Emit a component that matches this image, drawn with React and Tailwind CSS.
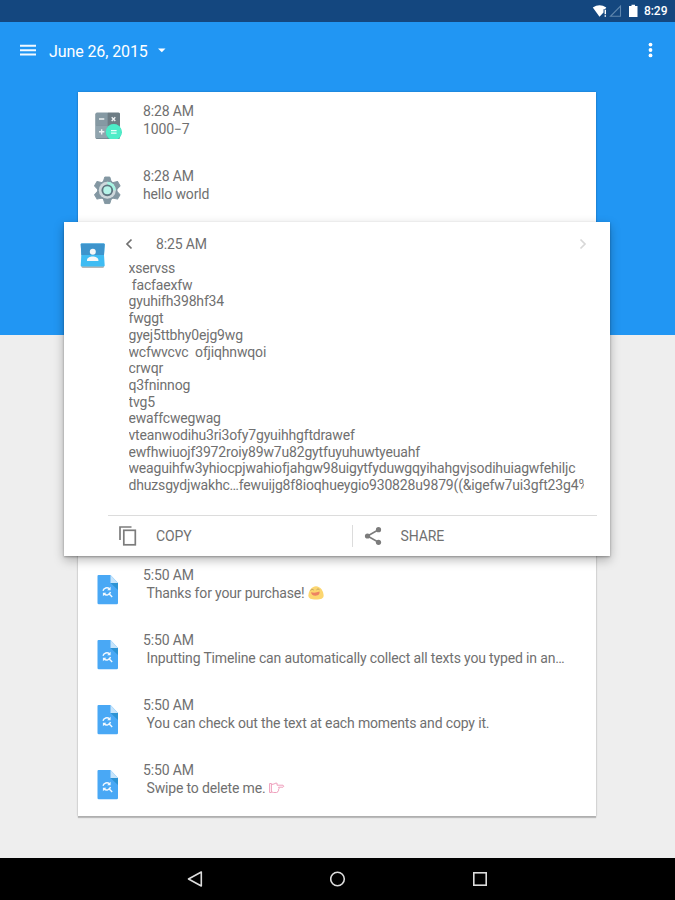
import React from 'react';

function CalculatorIcon() {
  return (
    <svg className="mb-[4px] ml-[1px] h-[30px] w-[30px] shrink-0" viewBox="0 0 30 30">
      <rect x="2.500" y="4" width="24.500" height="26" rx="1.500" fill="#71838c" />
      <path d="M2.500 16.500H14.800V29.300H4A1.500 1.500 0 0 1 2.500 27.800Z" fill="#90a4ae" />
      <path d="M2.500 5A1.500 1.500 0 0 1 4 3.500H14.800V16.500H2.500Z" fill="#8599a3" />
      <path d="M14.800 16.500H27V27.800A1.500 1.500 0 0 1 25.500 29.300H14.800Z" fill="#78878f" />
      <path d="M14.800 3.500H25.500A1.500 1.500 0 0 1 27 5V16.500H14.800Z" fill="#6d7c84" />
      <path d="M6 10H11.300M6 22.800H11.300M8.650 20.200V25.400M18.700 8.300L22.300 11.900M22.300 8.300L18.700 11.900" stroke="#eef2f4" strokeWidth="1.400" fill="none" />
      <circle cx="20.800" cy="23.300" r="8" fill="#37d9b3" />
      <circle cx="20.800" cy="22.900" r="7.900" fill="#4eecc8" />
      <path d="M18 21.700H23.600M18 24.200H23.600" stroke="#e8fffa" strokeWidth="1.200" />
    </svg>
  );
}

function GearIcon() {
  return (
    <svg className="mb-[1px] h-[30px] w-[30px] shrink-0" viewBox="-.8 -.8 31 31">
      <g fill="#8397a2" stroke="#8397a2" strokeWidth="1" strokeLinejoin="round">
        <circle cx="15" cy="15" r="10" />
        <path d="M10.800 6.500L12.400 1.300H17.600L19.200 6.500Z" />
        <path d="M10.800 6.500L12.400 1.300H17.600L19.200 6.500Z" transform="rotate(60 15 15)" />
        <path d="M10.800 6.500L12.400 1.300H17.600L19.200 6.500Z" transform="rotate(120 15 15)" />
        <path d="M10.800 6.500L12.400 1.300H17.600L19.200 6.500Z" transform="rotate(180 15 15)" />
        <path d="M10.800 6.500L12.400 1.300H17.600L19.200 6.500Z" transform="rotate(240 15 15)" />
        <path d="M10.800 6.500L12.400 1.300H17.600L19.200 6.500Z" transform="rotate(300 15 15)" />
      </g>
      <circle cx="15" cy="15" r="8.800" fill="#cfd8dc" />
      <path d="M15 6.200A8.800 8.800 0 0 1 23.800 15H15Z" fill="#a7f5e4" />
      <circle cx="15" cy="15" r="5.100" fill="#b5f3e8" stroke="#5f7681" strokeWidth="1.900" />
    </svg>
  );
}

function DocIcon() {
  return (
    <svg className="ml-[1px] h-[30px] w-[22px]" viewBox="0 0 22 30">
      <path d="M1.500 0H13.500L21 8V28A1.300 1.300 0 0 1 19.700 29.300H1.800A1.300 1.300 0 0 1 .5 28V1A1 1 0 0 1 1.500 0Z" fill="#49a8f5" />
      <path d="M13.500 8H21V15Z" fill="#2c93d4" />
      <path d="M13.500 0L21 8H13.500Z" fill="#c6e4fb" />
      <g fill="none" stroke="#f2f9ff" strokeWidth="1.400">
        <path d="M6 15.700A4 4 0 0 1 12.500 13.800" />
        <path d="M13.500 17A4 4 0 0 1 7 19" />
        <path d="M11.800 18.600L15.200 22" />
      </g>
      <path d="M13.600 11.700V15.200H10.100ZM5.900 21.200V17.700H9.400Z" fill="#f2f9ff" />
    </svg>
  );
}

function ContactIcon() {
  return (
    <svg className="h-[26px] w-[26px]" viewBox="0 0 26 26">
      <rect x="1.500" y="4" width="22.500" height="22" rx="1.500" fill="#b7b7b7" />
      <path d="M1.700 1.500H23.700A1 1 0 0 1 24.700 2.500L24 13L24.700 23.500A1 1 0 0 1 23.700 24.500H1.700A1 1 0 0 1 .7 23.500L1.400 13L.7 2.500A1 1 0 0 1 1.700 1.500Z" fill="#3fbcf3" />
      <path d="M1.700 1.500H23.700A1 1 0 0 1 24.700 2.500L24 13H1.400L.7 2.500A1 1 0 0 1 1.700 1.500Z" fill="#3d94cc" />
      <circle cx="12.800" cy="9.800" r="3" fill="#f5f7f8" />
      <path d="M7 19V17.900C7 15.600 10 14.400 12.700 14.400S18.400 15.600 18.400 17.900V19Z" fill="#f5f7f8" />
    </svg>
  );
}

function GrinEmoji() {
  return (
    <svg className="ml-[4px] h-[14px] w-[16px]" viewBox="0 0 16 14">
      <path d="M8 .3C3.500 .3 .4 5.500 .4 9.500C.4 12.500 3 13.500 8 13.500S15.600 12.500 15.600 9.500C15.600 5.500 12.500 .3 8 .3Z" fill="#fcd670" />
      <path d="M3 6.200Q7 7.400 11.500 5.500C12 7.800 10.500 9.700 7.500 9.700S3.200 8 3 6.200Z" fill="#ed8463" />
      <path d="M2.500 4.500Q4 2.300 5.800 4M8.500 3.800Q10 1.800 11.500 3.800" stroke="#b39a62" strokeWidth=".8" fill="none" />
    </svg>
  );
}

function PointEmoji() {
  return (
    <svg className="ml-[3.500px] h-[12px] w-[16px]" viewBox="0 0 16 12" fill="none" stroke="#efa0bd" strokeWidth="1">
      <path d="M.6 1.500H2.400V10.500H.6ZM2.400 2.500L5 2L7 1Q8.800 .8 8 3.200H14Q15.600 4.200 14 5.200H9.500Q11 6.200 9.500 7.200Q10.300 8.300 9 9Q9 10.500 7.500 10.500H4.500L2.400 9.800" />
    </svg>
  );
}

function Row({ icon, time, text, indent, emoji }) {
  return (
    <div className="flex h-[65px]">
      <div className="flex w-[65px] items-center pl-[14px] pt-[2px]">
        <div className="flex w-[30px] justify-center">{icon}</div>
      </div>
      <div className="pt-[10px] text-[14px] leading-[18px] tracking-[-0.155px]">
        <div>{time}</div>
        <div className={`flex items-center whitespace-pre ${indent ? 'pl-[3.500px]' : ''}`}>
          <span>{text}</span>
          {emoji}
        </div>
      </div>
    </div>
  );
}

const lines = [
  'xservss',
  ' facfaexfw',
  'gyuhifh398hf34',
  'fwggt',
  'gyej5ttbhy0ejg9wg',
  'wcfwvcvc  ofjiqhnwqoi',
  'crwqr',
  'q3fninnog',
  'tvg5',
  'ewaffcwegwag',
  'vteanwodihu3ri3ofy7gyuihhgftdrawef',
  'ewfhwiuojf3972roiy89w7u82gytfuyuhuwtyeuahf',
  'weaguihfw3yhiocpjwahiofjahgw98uigytfyduwgqyihahgvjsodihuiagwfehiljc',
  'dhuzsgydjwakhc…fewuijg8f8ioqhueygio930828u9879((&igefw7ui3gft23g4%',
];

function ExpandedCard() {
  return (
    <section className="relative -mx-[14px] flex h-[334px] flex-col bg-white shadow-[0_1px_2px_rgba(0,0,0,0.3),0_4px_10px_rgba(0,0,0,0.28)]">
      <div className="flex h-[293px]">
        <div className="w-[64.500px] pl-[16px] pt-[20px]">
          <ContactIcon />
        </div>
        <div className="w-[455px]">
          <div className="flex h-[38px] items-center pt-[6px] text-[14px]">
            <svg className="-ml-[4px] h-[12px] w-[8px]" viewBox="0 0 8 12" fill="none" stroke="#707070" strokeWidth="1.700">
              <path d="M6.500 1.500L2 6L6.500 10.500" />
            </svg>
            <span className="ml-[23.500px] flex-1 tracking-[-0.155px]">8:25 AM</span>
            <svg className="mr-[-3.500px] h-[12px] w-[8px]" viewBox="0 0 8 12" fill="none" stroke="#d8d8d8" strokeWidth="1.700">
              <path d="M1.500 1.500L6 6L1.500 10.500" />
            </svg>
          </div>
          <div className="overflow-hidden whitespace-pre text-[14px] leading-[16.700px] tracking-[-0.165px]">
            {lines.map((line) => (
              <div key={line}>{line}</div>
            ))}
          </div>
        </div>
      </div>
      <div className="ml-[44px] mr-[13.500px] flex flex-1 items-center border-t border-[#dcdcdc] text-[14px] tracking-[-0.1px]">
        <div className="flex h-[22px] w-[245px] items-center border-r border-[#dcdcdc] pl-[10px]">
          <svg className="mb-[1px] h-[22px] w-[20px]" viewBox="0 0 20 22" fill="none" stroke="#7c7c7c" strokeWidth="1.700">
            <path d="M2 15V2H13.500" />
            <rect x="5.800" y="5.300" width="11.500" height="14.500" />
          </svg>
          <span className="ml-[18px]">COPY</span>
        </div>
        <svg className="mb-[1px] ml-[11px] h-[20px] w-[18px]" viewBox="0 0 18 20">
          <path d="M14.500 3.700L3.500 10L14.500 16.300" fill="none" stroke="#7c7c7c" strokeWidth="1.600" />
          <circle cx="14.500" cy="3.700" r="2.600" fill="#7c7c7c" />
          <circle cx="3.500" cy="10" r="2.600" fill="#7c7c7c" />
          <circle cx="14.500" cy="16.300" r="2.600" fill="#7c7c7c" />
        </svg>
        <span className="ml-[18.500px]">SHARE</span>
      </div>
    </section>
  );
}

export default function App() {
  return (
    <div className="flex h-[900px] w-[675px] flex-col overflow-hidden bg-[#eee] font-[Roboto,sans-serif] text-[#707070]">
      <div className="flex h-[22px] shrink-0 items-center justify-end bg-[#14477f] pr-[7.500px] text-white">
        <svg className="h-[14px] w-[46px]" viewBox="0 0 46 14">
          <path d="M.8 3.500Q7.500-1.200 14.300 3.500L13 5.200H11.500V8.500L7.500 12.800Z" fill="#fff" />
          <path d="M12.600 5.800H14V10.300H12.600ZM12.600 11.300H14V12.800H12.600Z" fill="#fff" />
          <path d="M28.500 2V12.300H18.500Z" fill="none" stroke="#5f86ad" strokeWidth="1.100" />
          <path d="M37 2H39.500V.8H43V2H45.500V13H37Z" fill="#fff" />
        </svg>
        <span className="ml-[5.500px] text-[12px] font-medium">8:29</span>
      </div>
      <main className="h-[836px] shrink-0 bg-[linear-gradient(#2196f3_313px,#eee_313px)]">
        <header className="flex h-[70px] items-start pl-[20px] pr-[22px] pt-[16px] text-white">
          <svg className="mt-[6px] h-[12px] w-[16px]" viewBox="0 0 16 12" fill="none" stroke="#f2f9ff" strokeWidth="2">
            <path d="M0 1.800H16M0 6.200H16M0 10.600H16" />
          </svg>
          <span className="ml-[13px] text-[16px] leading-[27px] tracking-[-0.1px]">June 26, 2015</span>
          <svg className="ml-[10px] mt-[10px] h-[5px] w-[8px]" viewBox="0 0 8 5">
            <path d="M0 .5H7.500L3.800 4.300Z" fill="#fff" />
          </svg>
          <svg className="ml-auto mt-[4px] h-[16px] w-[5px]" viewBox="0 0 5 16" fill="#fff">
            <circle cx="2.500" cy="2.600" r="1.900" />
            <circle cx="2.500" cy="8" r="1.900" />
            <circle cx="2.500" cy="13.400" r="1.900" />
          </svg>
        </header>
        <div className="ml-[78px] w-[518.400px] bg-white shadow-[0_2px_1px_rgba(0,0,0,0.2),0_0_2px_rgba(0,0,0,0.25)]">
          <Row icon={<CalculatorIcon />} time="8:28 AM" text="1000−7" />
          <Row icon={<GearIcon />} time="8:28 AM" text="hello world" />
          <ExpandedCard />
          <Row icon={<DocIcon />} time="5:50 AM" text="Thanks for your purchase!" indent emoji={<GrinEmoji />} />
          <Row icon={<DocIcon />} time="5:50 AM" text="Inputting Timeline can automatically collect all texts you typed in an…" indent />
          <Row icon={<DocIcon />} time="5:50 AM" text="You can check out the text at each moments and copy it." indent />
          <Row icon={<DocIcon />} time="5:50 AM" text="Swipe to delete me." indent emoji={<PointEmoji />} />
        </div>
      </main>
      <nav className="flex h-[42px] shrink-0 items-center justify-between bg-black px-[187px]">
        <svg className="h-[16px] w-[16px]" viewBox="0 0 16 16" fill="none" stroke="#ddd" strokeWidth="1.600" strokeLinejoin="round">
          <path d="M14.300 1V15L1.500 8Z" />
        </svg>
        <svg className="h-[16px] w-[16px]" viewBox="0 0 16 16" fill="none" stroke="#ddd" strokeWidth="1.600">
          <circle cx="7.500" cy="8" r="6.800" />
        </svg>
        <svg className="h-[16px] w-[16px]" viewBox="0 0 16 16" fill="none" stroke="#ddd" strokeWidth="1.600">
          <rect x="1.800" y="1.800" width="12.400" height="12.400" />
        </svg>
      </nav>
    </div>
  );
}
